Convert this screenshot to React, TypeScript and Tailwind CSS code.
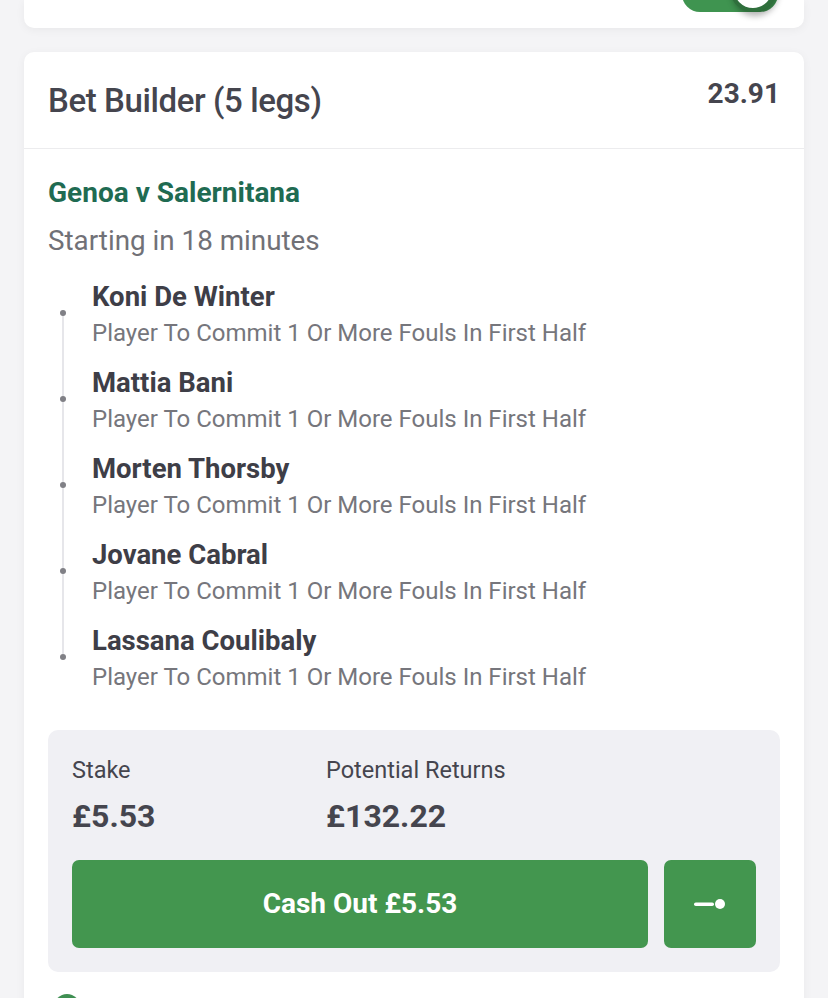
import React from "react";

const legs = [
  "Koni De Winter",
  "Mattia Bani",
  "Morten Thorsby",
  "Jovane Cabral",
  "Lassana Coulibaly",
];

export default function App() {
  return (
    <div
      className="min-h-[998px] w-[828px] bg-[#f4f4f6] overflow-hidden"
      style={{ fontFamily: "Roboto, 'Noto Sans', sans-serif" }}
    >
      {/* top card remnant */}
      <div className="relative mx-6 h-[28px] rounded-b-[10px] bg-white shadow-[0_2px_10px_rgba(0,0,0,0.05)]">
        <div className="absolute right-[26px] -top-[24px] h-[36px] w-[96px] rounded-full bg-[#3f9450]">
          <div className="absolute right-[2px] -top-[10px] h-[46px] w-[46px] rounded-full border-[4px] border-[#2f6f3c] bg-white shadow-[2px_4px_6px_rgba(0,0,0,0.3)]" />
        </div>
      </div>

      {/* main card */}
      <div className="mx-6 mt-6 rounded-t-[10px] bg-white shadow-[0_2px_10px_rgba(0,0,0,0.05)]">
        <div className="flex h-[97px] items-start justify-between border-b border-[#ececee] px-6 pt-[29px]">
          <div className="text-[33px] font-medium leading-[40px] tracking-[-0.4px] text-[#45454e]">
            Bet Builder (5 legs)
          </div>
          <div className="-mt-[2px] text-[28px] font-bold leading-[30px] text-[#45454e]">
            23.91
          </div>
        </div>

        <div className="px-6 pt-[28px]">
          <div className="text-[28px] font-bold leading-[32px] text-[#1f6b52]">
            Genoa v Salernitana
          </div>
          <div className="mt-[16px] text-[27.8px] leading-[32px] text-[#717177]">
            Starting in 18 minutes
          </div>

          <div className="relative mt-[6px]">
            <div className="absolute left-[14px] top-[47px] h-[344px] w-[2px] bg-[#e6e6ea]" />
            {legs.map((name) => (
              <div key={name} className="relative h-[86px] pl-[44px]">
                <div className="absolute left-[12px] top-[47px] h-[6px] w-[6px] rounded-full bg-[#808086]" />
                <div className="pt-[18px] text-[27.5px] font-bold leading-[32px] text-[#3e3e47]">
                  {name}
                </div>
                <div className="mt-[5px] text-[24px] leading-[30px] text-[#76767c]">
                  Player To Commit 1 Or More Fouls In First Half
                </div>
              </div>
            ))}
          </div>

          <div className="mt-[37px] rounded-[10px] bg-[#f0f0f4] px-6 pb-[24px] pt-[26px]">
            <div className="flex">
              <div className="w-[254px]">
                <div className="text-[23.5px] leading-[28px] text-[#45454e]">Stake</div>
                <div className="mt-[14px] text-[32px] font-bold leading-[36px] text-[#45454e]">
                  £5.53
                </div>
              </div>
              <div>
                <div className="text-[23.5px] leading-[28px] text-[#45454e]">
                  Potential Returns
                </div>
                <div className="mt-[14px] text-[32px] font-bold leading-[36px] text-[#45454e]">
                  £132.22
                </div>
              </div>
            </div>
            <div className="mt-[26px] flex gap-4">
              <div className="flex h-[88px] flex-1 items-center justify-center rounded-[7px] bg-[#43964f] text-[28px] font-bold text-white">
                Cash Out £5.53
              </div>
              <div className="flex h-[88px] w-[92px] items-center justify-center rounded-[7px] bg-[#43964f]">
                <svg width="34" height="14" viewBox="0 0 34 14">
                  <rect x="1" y="5.5" width="20" height="3.5" rx="1.75" fill="#fff" />
                  <circle cx="27" cy="7" r="5" fill="#fff" />
                </svg>
              </div>
            </div>
          </div>

          <div className="mt-[22px] h-[20px] pl-[6px]">
            <div className="h-[26px] w-[26px] rounded-full bg-[#3f8f52]" />
          </div>
        </div>
      </div>
    </div>
  );
}
